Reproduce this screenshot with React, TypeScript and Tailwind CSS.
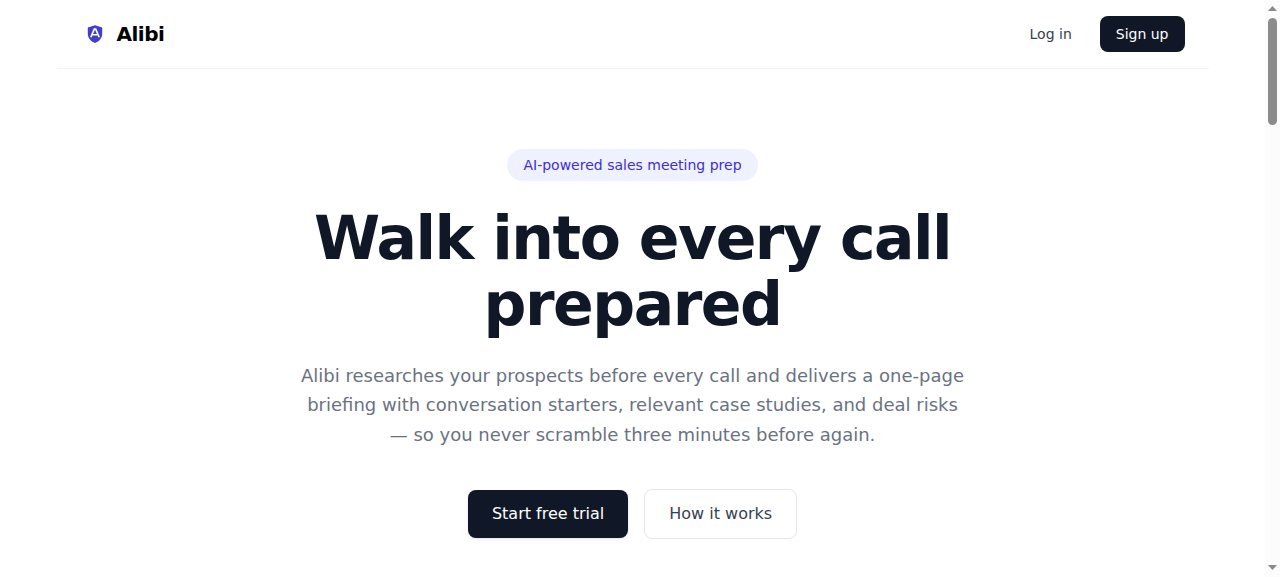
import type { ReactNode } from "react";

function ShieldLogo() {
    return (
        <svg width="28" height="28" viewBox="0 0 28 28" fill="none" aria-hidden="true">
            <path
                d="M14 5.2L21.2 7.6V13.6C21.2 18.2 18.4 21.4 14 23C9.6 21.4 6.8 18.2 6.8 13.6V7.6L14 5.2Z"
                fill="#3f3fcb"
            />
            <path d="M9.8 17.2L13.3 9.1H14.7L18.2 17.2M11.4 14.7H16.6" stroke="#fff" strokeWidth="1.6" />
        </svg>
    );
}

function Header() {
    return (
        <header className="mx-auto flex w-full max-w-6xl items-center justify-between border-b border-gray-100 px-6 py-4">
            <a href="#" className="flex items-center gap-2">
                <ShieldLogo />
                <span className="text-xl font-bold tracking-tight text-black">Alibi</span>
            </a>
            <nav className="flex items-center gap-3 text-sm">
                <a href="#" className="px-4 py-2 text-gray-700">
                    Log in
                </a>
                <a href="#" className="rounded-lg bg-gray-900 px-4 py-2 text-white">
                    Sign up
                </a>
            </nav>
        </header>
    );
}

function Hero() {
    return (
        <section className="mx-auto flex max-w-3xl flex-col items-center pt-20 text-center">
            <span className="rounded-full bg-indigo-50 px-4 py-1.5 text-sm text-indigo-700">
                AI-powered sales meeting prep
            </span>
            <h1 className="mt-6 text-[60px] leading-[1.1] font-bold tracking-tight text-gray-900">
                Walk into every call prepared
            </h1>
            <p className="mt-6 max-w-2xl text-lg leading-relaxed text-gray-500">
                Alibi researches your prospects before every call and delivers a one-page briefing with conversation
                starters, relevant case studies, and deal risks — so you never scramble three minutes before again.
            </p>
            <div className="mt-10 flex items-center gap-4">
                <a href="#" className="rounded-lg bg-gray-900 px-6 py-3 text-white shadow-sm">
                    Start free trial
                </a>
                <a href="#" className="rounded-lg border border-gray-200 px-6 py-3 text-gray-700">
                    How it works
                </a>
            </div>
        </section>
    );
}

function Scrollbar() {
    return (
        <div className="flex w-[15px] shrink-0 flex-col items-center justify-between bg-[#fcfcfc]">
            <div className="flex flex-col items-center gap-[7px] pt-1.5">
                <svg width="9" height="5" viewBox="0 0 9 5" fill="#8b8b8b">
                    <path d="M4.5 0L9 5H0Z" />
                </svg>
                <div className="h-[107px] w-[9px] rounded-full bg-[#8b8b8b]" />
            </div>
            <svg className="mb-[7px]" width="9" height="5" viewBox="0 0 9 5" fill="#8b8b8b">
                <path d="M0 0H9L4.5 5Z" />
            </svg>
        </div>
    );
}

function Page({ children }: { children: ReactNode }) {
    return (
        <div className="flex h-[577px] w-full overflow-hidden bg-white font-['DejaVu_Sans',sans-serif]">
            <div className="min-w-0 flex-1">{children}</div>
            <Scrollbar />
        </div>
    );
}

export default function App() {
    return (
        <Page>
            <Header />
            <main>
                <Hero />
            </main>
        </Page>
    );
}
